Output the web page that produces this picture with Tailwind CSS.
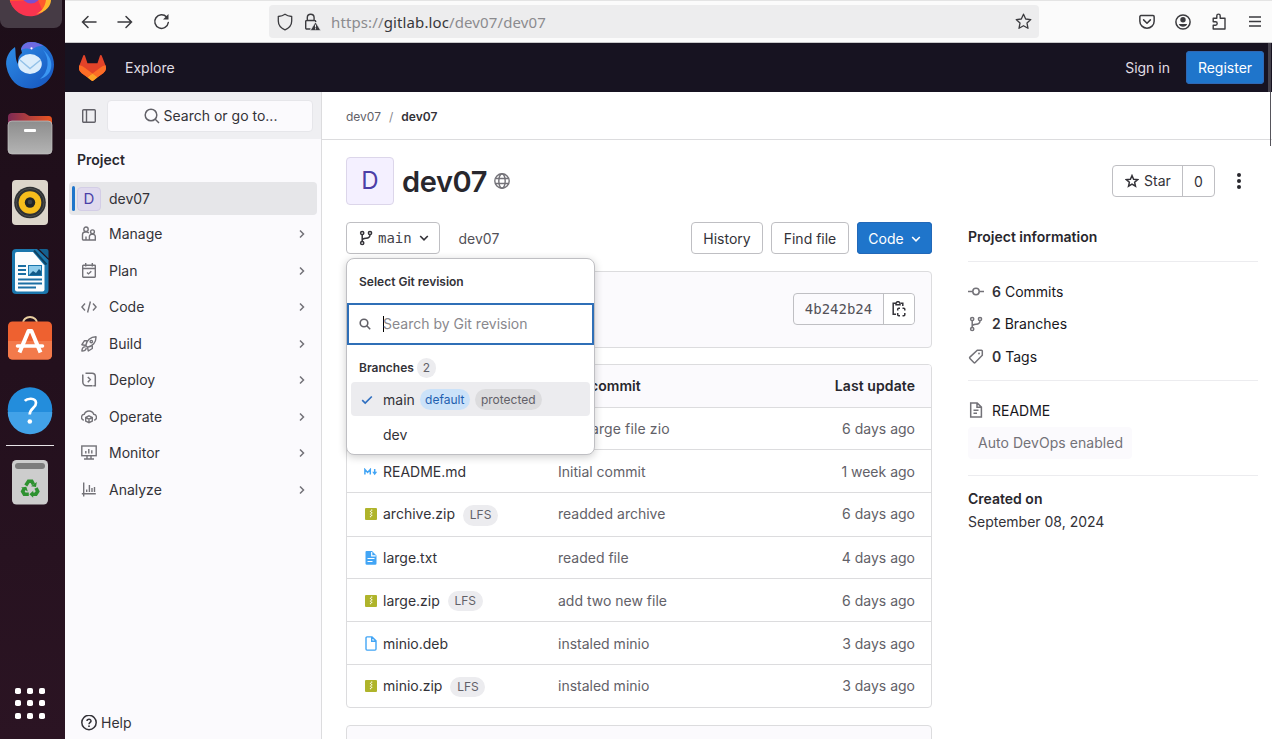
<!DOCTYPE html>
<html lang="en">
<head>
<meta charset="utf-8">
<title>dev07 / dev07 · GitLab</title>
<script src="https://cdn.jsdelivr.net/npm/@tailwindcss/browser@4"></script>
</head>
<body class="w-[1272px] h-[739px] overflow-hidden bg-white text-sm leading-5 text-[#333238] font-['Inter','Liberation_Sans',sans-serif]">
<svg class="hidden">
  <symbol id="chev-r" viewBox="0 0 8 10"><path d="M2 1.500 5.500 5 2 8.500" fill="none" stroke="currentColor" stroke-width="1.500"/></symbol>
  <symbol id="chev-d" viewBox="0 0 10 8"><path d="M1.200 2 5 5.800 8.800 2" fill="none" stroke="currentColor" stroke-width="1.600"/></symbol>
  <symbol id="branch" viewBox="0 0 16 16"><g fill="none" stroke="currentColor" stroke-width="1.500"><circle cx="4.200" cy="3" r="1.600"/><circle cx="12" cy="3" r="1.600"/><circle cx="4.200" cy="13" r="1.600"/><path d="M4.200 4.800v6.400M12 4.800c0 2.600-1.600 3.400-4 3.400-2.200 0-3.800.6-3.800 2.500"/></g></symbol>
  <symbol id="zip" viewBox="0 0 12 12"><rect width="12" height="12" rx="1" fill="#afb42b"/><path d="M6 1.500h1.300v1.300H6zM4.900 2.800h1.300v1.300H4.900zM6 4.100h1.300v1.300H6zM4.900 5.400h1.300v1.300H4.900zM6 6.700h1.300V8H6zM4.900 8h1.300v1.300H4.900z" fill="#f3f4d8"/></symbol>
</svg>
<div class="flex h-full">

  <!-- Ubuntu dock -->
  <aside class="flex w-[65px] shrink-0 flex-col bg-gradient-to-b from-[#1d0e19] via-[#23101d] to-[#2b1423]">
    <svg class="block shrink-0" width="65" height="28" viewBox="0 0 65 28"><rect x="0" y="-20" width="62" height="48" rx="8" fill="#463b45"/><circle cx="30" cy="-5.500" r="21" fill="#ff5a2c"/><path d="M10 1a21 21 0 0 0 33 11L38 0z" fill="#f8344f"/><path d="M35 14.500c7-2.500 10-8 11-14.500l5 0c0 5-4 12-16 14.500z" fill="#ffb82e"/><circle cx="31" cy="-6.500" r="10" fill="#7a4fcf"/></svg>
    <svg class="block shrink-0" width="65" height="72" viewBox="0 28 65 72"><defs><linearGradient id="tb" x1="0" y1="0" x2="1" y2="1"><stop offset="0" stop-color="#2f8fe8"/><stop offset="1" stop-color="#1553bd"/></linearGradient></defs><path d="M15 47c-7 5-10 12-8.500 20C9 80 18 88.500 30 88.500c13 0 24-10 24-24 0-8-4-14-9-18-4-3-8-4.500-14-4.500-6 0-9 3-10 7l1 4c-4 3-4 7-4 11-3-4-2-12-3-17z" fill="url(#tb)"/><path d="M21 50c1-5 5-8 10-8 5 0 9 2 12 4-5-.5-8 1-11 4-4-2-7-2-11 0z" fill="#6f6ae2"/><path d="M43 50c7 8 6 22-3 29 13-3 16-19 3-29z" fill="#3b97f2"/><ellipse cx="30" cy="64" rx="11.800" ry="10" fill="#dcedfb"/><path d="M20 60l10 8.500L40.500 60" fill="none" stroke="#93c1e8" stroke-width="1.400"/><circle cx="31.500" cy="48.300" r="1.100" fill="#fff"/></svg>
    <svg class="block shrink-0" width="65" height="68" viewBox="0 100 65 68"><defs><linearGradient id="fd" x1="0" x2="1"><stop offset="0" stop-color="#7d2a55"/><stop offset="1" stop-color="#ea5420"/></linearGradient><linearGradient id="fg" x1="0" y1="0" x2="0" y2="1"><stop offset="0" stop-color="#8d8d8d"/><stop offset="1" stop-color="#b4b4b4"/></linearGradient></defs><path d="M8 117c0-3 2-4 4-4h12c2 0 4 3 6 3h18c3 0 4 1 4 4v14H8z" fill="url(#fd)"/><rect x="8" y="121" width="44" height="33" rx="4" fill="url(#fg)" stroke="#c4c4c4" stroke-width=".7"/><rect x="24" y="129" width="12" height="3" rx="1" fill="#fff"/></svg>
    <svg class="block shrink-0" width="65" height="69" viewBox="0 168 65 69"><rect x="12" y="180" width="36" height="45" rx="4" fill="#ddd6cb"/><circle cx="30" cy="202.500" r="15.800" fill="#2f3133"/><circle cx="30" cy="202.500" r="14" fill="none" stroke="#555" stroke-width=".8"/><circle cx="30" cy="202.500" r="11.300" fill="#f7bd1c"/><circle cx="30" cy="202.500" r="5.200" fill="#222427"/><circle cx="30" cy="202" r="2.300" fill="#3c4044"/></svg>
    <svg class="block shrink-0" width="65" height="69" viewBox="0 237 65 69"><path d="M16 249h21l11.500 11v30a4 4 0 0 1-4 4H16a4 4 0 0 1-4-4v-37a4 4 0 0 1 4-4z" fill="#1b77ad"/><path d="M39 249h7.500a2 2 0 0 1 2 2v7.500z" fill="#14608f"/><path d="M17 252h16l11.500 13.500v24a2 2 0 0 1-2 2H17a2 2 0 0 1-2-2v-35.500a2 2 0 0 1 2-2z" fill="#fbfdfe"/><path d="M34 250.500 46.500 264.500" stroke="#0d4263" stroke-width="2"/><path d="M18 266h8M18 270h8M18 274h8M18 279.500h24M18 283.500h24M18 287.500h18" stroke="#1b6fa3" stroke-width="1.800"/><rect x="28.500" y="265.500" width="13" height="10" fill="#8fcdec" stroke="#1b77ad"/><path d="M29 275l4-4 3 2 3-4 2 2v4z" fill="#125a88"/></svg>
    <svg class="block shrink-0" width="65" height="69" viewBox="0 306 65 69"><path d="M23 325v-2a7 6 0 0 1 14 0v2" fill="none" stroke="#e9cfa0" stroke-width="2"/><rect x="8" y="321.500" width="44" height="38" rx="4.500" fill="#ee6130"/><path d="M8 341h44v14a4.500 4.500 0 0 1-4.500 4.500h-35A4.500 4.500 0 0 1 8 355z" fill="#f37a4b"/><path d="M19.500 352.500 28.500 331h3L40.500 352.500" fill="none" stroke="#fff" stroke-width="4" stroke-linejoin="round"/><path d="M17.500 346h25" stroke="#fff" stroke-width="3.500" stroke-linecap="round"/></svg>
    <svg class="block shrink-0" width="65" height="69" viewBox="0 375 65 69"><circle cx="30" cy="409.500" r="22.300" fill="#238ddc"/><path d="M7.700 412a22.300 22.300 0 0 0 44.600 0z" fill="#42a2e8"/><path d="M24.800 400.800c2-2.300 10.700-3.800 11.200 2 .3 5-6.300 5.500-6.300 11.700" fill="none" stroke="#fff" stroke-width="2.700"/><circle cx="29.800" cy="421.500" r="2.300" fill="#fff"/></svg>
    <div class="ml-[6px] mt-px h-px w-12 shrink-0 bg-[#e8e4e7]"></div>
    <svg class="block shrink-0" width="65" height="69" viewBox="0 446 65 69"><rect x="12" y="460" width="36" height="44.500" rx="4.500" fill="#cdcdcd"/><rect x="15" y="463" width="30" height="6" rx="3" fill="#7d7d7d"/><g fill="none" stroke="#2e9130" stroke-width="3.600"><path d="M25.800 485.500l2.700-4.200h3.300l1.700 3"/><path d="M36 488l1.700 3.300-1.800 2.900h-3.400"/><path d="M28.800 494.200h-4.500l-1.600-2.700 1.500-2.800"/></g><path d="M31 486.300l5 .6.800-5zM33.200 490.700v7l-3.800-3.500zM21 487.500l5.300-.8 1.500 4.800z" fill="#2e9130"/></svg>
    <div class="flex-1"></div>
    <svg class="mb-4 block shrink-0" width="65" height="40" viewBox="0 683 65 40"><g fill="#fff"><rect x="15" y="688" width="6" height="6" rx="1.800"/><rect x="27" y="688" width="6" height="6" rx="1.800"/><rect x="39" y="688" width="6" height="6" rx="1.800"/><rect x="15" y="700" width="6" height="6" rx="1.800"/><rect x="27" y="700" width="6" height="6" rx="1.800"/><rect x="39" y="700" width="6" height="6" rx="1.800"/><rect x="15" y="713" width="6" height="6" rx="1.800"/><rect x="27" y="713" width="6" height="6" rx="1.800"/><rect x="39" y="713" width="6" height="6" rx="1.800"/></g></svg>
  </aside>

  <div class="flex min-w-0 flex-1 flex-col">
    <!-- Browser toolbar -->
    <div class="flex h-[43px] shrink-0 items-center border-t border-b border-t-[#e4e4e4] border-b-[#c8c8ca] bg-[#fbfbfb] text-[#3b3b3f]">
      <svg class="ml-4" width="16" height="16" viewBox="0 0 16 16" fill="none" stroke="currentColor" stroke-width="1.500" stroke-linecap="round"><path d="M15 8H1.500M7 2.500 1.500 8 7 13.500"/></svg>
      <svg class="ml-5" width="16" height="16" viewBox="0 0 16 16" fill="none" stroke="currentColor" stroke-width="1.500" stroke-linecap="round"><path d="M1 8h13.500M9 2.500 14.500 8 9 13.500"/></svg>
      <svg class="ml-5" width="17" height="17" viewBox="0 0 17 17" fill="none" stroke="currentColor" stroke-width="1.500" stroke-linecap="round"><path d="M15.300 9.500A6.800 6.800 0 1 1 13.600 4"/><path d="M15.500 1v5.500H10z" fill="currentColor" stroke="none"/></svg>
      <div class="ml-[99px] flex h-[33px] w-[770px] items-center rounded bg-[#ededee]">
        <svg class="ml-2" width="16" height="18" viewBox="0 0 16 18" fill="none" stroke="currentColor" stroke-width="1.300" stroke-linejoin="round"><path d="M8 1.200C6 2.700 3.500 3.300 1.300 3.500V8c0 4.500 3.200 7.300 6.700 8.800 3.500-1.500 6.700-4.300 6.700-8.800V3.500C12.500 3.300 10 2.700 8 1.200z"/></svg>
        <svg class="ml-[11px]" width="17" height="18" viewBox="0 0 17 18" fill="none" stroke="currentColor" stroke-width="1.400"><path d="M6.500 16H2.700a1 1 0 0 1-1-1V8.500a1 1 0 0 1 1-1h8a1 1 0 0 1 1 1V9M3.300 7.500V4.700a3.400 3.400 0 0 1 6.800 0v2.800"/><path d="M11.500 9 16.700 17.500H6.300z" fill="currentColor" stroke="#ededee" stroke-width=".6"/><path d="M11.500 11.700v2.800M11.500 15.200v1.200" stroke="#ededee" stroke-width="1"/></svg>
        <span class="ml-2.5 whitespace-nowrap text-[15px] tracking-[0.12px] text-[#8b8b8e] font-['Noto_Sans',sans-serif]">https://<span class="text-[#38383b]">gitlab.loc</span>/dev07/dev07</span>
        <svg class="mr-[7px] ml-auto" width="17" height="17" viewBox="0 0 17 17" fill="none" stroke="currentColor" stroke-width="1.300" stroke-linejoin="round"><path d="M8.500 1.200 10.700 6l5.100.6L12 10.100l1 5.200-4.500-2.600L4 15.300l1-5.200L1.200 6.600 6.300 6z"/></svg>
      </div>
      <svg class="ml-[100px]" width="16" height="16" viewBox="0 0 15 15" fill="none" stroke="currentColor" stroke-width="1.400" stroke-linecap="round" stroke-linejoin="round"><path d="M1.800 1.500h11.400a1 1 0 0 1 1 1v4.300a6.700 6.500 0 0 1-13.400 0V2.500a1 1 0 0 1 1-1z"/><path d="M4.300 5.500 7.500 8.700l3.200-3.200"/></svg>
      <svg class="ml-5" width="16" height="16" viewBox="0 0 16 16"><circle cx="8" cy="8" r="7.100" fill="none" stroke="currentColor" stroke-width="1.500"/><circle cx="8" cy="5.800" r="2.700" fill="currentColor"/><path d="M3.800 10h8.400c-.6 1.900-2.200 2.700-4.200 2.700s-3.600-.8-4.200-2.700z" fill="currentColor"/></svg>
      <svg class="ml-5" width="16" height="17" viewBox="0 0 16 17" fill="none" stroke="currentColor" stroke-width="1.400" stroke-linejoin="round"><path d="M2.200 16V12.200h2.300a1.700 1.700 0 0 0 0-3.400H2.200V5.200h3.600V2.800a1.700 1.700 0 0 1 3.400 0v2.400H14V16z"/></svg>
      <svg class="ml-[21px]" width="14" height="16" viewBox="0 0 14 16" stroke="currentColor" stroke-width="1.300"><path d="M1 3h12M1 7.500h12M1 12h12"/></svg>
    </div>

    <!-- GitLab top bar -->
    <header class="relative flex h-[49px] shrink-0 items-center bg-[#171321] text-[#e0dee4]">
      <svg class="ml-[14px]" width="27" height="26" viewBox="0 0 25 24"><path d="m24.507 9.500-.034-.090L21.082.562a.896.896 0 0 0-1.694.091l-2.290 7.010H7.825L5.535.653a.898.898 0 0 0-1.694-.090L.451 9.411.416 9.500a6.297 6.297 0 0 0 2.090 7.278l.012.010.030.022 5.160 3.867 2.560 1.935 1.554 1.176a1.051 1.051 0 0 0 1.268 0l1.555-1.176 2.560-1.935 5.197-3.890.014-.010A6.297 6.297 0 0 0 24.507 9.500Z" fill="#E24329"/><path d="m24.507 9.500-.034-.090a11.440 11.440 0 0 0-4.560 2.051l-7.447 5.632 4.742 3.584 5.197-3.890.014-.010A6.297 6.297 0 0 0 24.507 9.500Z" fill="#FC6D26"/><path d="m7.707 20.677 2.560 1.935 1.555 1.176a1.051 1.051 0 0 0 1.268 0l1.555-1.176 2.560-1.935-4.743-3.584-4.755 3.584Z" fill="#FCA326"/><path d="M5.010 11.461a11.430 11.430 0 0 0-4.560-2.050L.416 9.500a6.297 6.297 0 0 0 2.090 7.278l.012.010.030.022 5.160 3.867 4.745-3.584-7.444-5.632Z" fill="#FC6D26"/></svg>
      <span class="mt-px ml-[19px]">Explore</span>
      <span class="mt-px ml-auto">Sign in</span>
      <span class="mr-2 ml-4 flex h-[33px] w-[78px] items-center justify-center rounded bg-[#1f75cb] text-white shadow-[inset_0_0_0_1px_#2f68b4]">Register</span>
      <i class="absolute top-0 right-px h-[49px] w-[3px] bg-[#45424d]"></i>
    </header>

    <div class="flex min-h-0 flex-1">
      <!-- Project sidebar -->
      <nav class="flex w-[257px] shrink-0 flex-col border-r border-[#dcdcde] bg-[#fbfafd]">
        <div class="flex h-[47px] shrink-0 items-center bg-[#ececef]/80">
          <svg class="ml-[17px] text-[#626168]" width="14" height="14" viewBox="0 0 14 14" fill="none" stroke="currentColor" stroke-width="1.400"><rect x=".7" y=".7" width="12.600" height="12.600" rx="1"/><path d="M4.500 1v12"/></svg>
          <div class="ml-[11px] flex h-[32px] w-[206px] items-center justify-center gap-1 rounded border border-[#e6e6ea] bg-[#fbfafd] pl-px">
            <svg class="text-[#626168]" width="16" height="16" viewBox="0 0 16 16" fill="none" stroke="currentColor" stroke-width="1.500"><circle cx="7" cy="7" r="5.800"/><path d="m11 11 4 4"/></svg>
            <span>Search or go to...</span>
          </div>
        </div>
        <h2 class="mt-[11px] ml-3 font-semibold text-[#28272d]">Project</h2>
        <div class="mt-3 mr-1 ml-1 flex h-[33px] items-center rounded bg-[#e6e6e9]">
          <i class="ml-[3px] h-[25px] w-[3px] rounded bg-[#1f75cb]"></i>
          <span class="ml-[2px] flex h-6 w-6 items-center justify-center rounded border border-[#d3cde6] bg-[#e0daee] text-[15px] text-[#4a3fa8]">D</span>
          <span class="ml-2">dev07</span>
        </div>
        <ul class="mt-px flex flex-col text-[#333238] *:flex *:h-[36.5px] *:items-center">
          <li><svg class="mr-3 ml-4 text-[#737278]" width="16" height="16" viewBox="0 0 16 16" fill="none" stroke="currentColor" stroke-width="1.400"><circle cx="5" cy="3.200" r="2.200"/><circle cx="11.500" cy="5.800" r="1.900"/><path d="M8 14H2.500a1 1 0 0 1-1-1V8.500A2.700 2.700 0 0 1 4.200 6h1.600a2.400 2.400 0 0 1 2 1.200M8.400 14V10.500a2.200 2.200 0 0 1 2.200-2.200h1.500a2.200 2.200 0 0 1 2.200 2.200V14zM5 10.500V14"/></svg>Manage<svg class="mr-[15px] ml-auto text-[#737278]" width="8" height="10"><use href="#chev-r"/></svg></li>
          <li><svg class="mr-3 ml-4 text-[#737278]" width="16" height="16" viewBox="0 0 16 16" fill="none" stroke="currentColor" stroke-width="1.400"><rect x="1.700" y="2.200" width="12.600" height="12" rx=".6"/><path d="M4.700 0v3.500M11.300 0v3.500M2 5.500h12M6 9.500l1.500 1.400 2.800-2.700"/></svg>Plan<svg class="mr-[15px] ml-auto text-[#737278]" width="8" height="10"><use href="#chev-r"/></svg></li>
          <li><svg class="mr-3 ml-4 text-[#737278]" width="16" height="16" viewBox="0 0 16 16" fill="none" stroke="currentColor" stroke-width="1.400"><path d="M4 4.500.9 8 4 11.500M12 4.500 15.100 8 12 11.500M9.400 2.500l-2.800 11"/></svg>Code<svg class="mr-[15px] ml-auto text-[#737278]" width="8" height="10"><use href="#chev-r"/></svg></li>
          <li><svg class="mr-3 ml-4 text-[#737278]" width="16" height="16" viewBox="0 0 16 16" fill="none" stroke="currentColor" stroke-width="1.400" stroke-linejoin="round"><path d="M4.800 9.500C5.500 4.500 9.500.8 15 .8c.2 5.500-3.500 9.700-8.500 10.400zM6.200 4.700H3.500L.9 8.700l4 .8M11.300 9.800v2.700L7.300 15l-.8-3.800M4.500 11C2 10.500 1 12.500.9 15c2 0 4.600-.8 4.200-3.200"/><circle cx="10.300" cy="5.600" r="1.200"/></svg>Build<svg class="mr-[15px] ml-auto text-[#737278]" width="8" height="10"><use href="#chev-r"/></svg></li>
          <li><svg class="mr-3 ml-4 text-[#737278]" width="16" height="16" viewBox="0 0 16 16" fill="none" stroke="currentColor" stroke-width="1.500"><path d="M4.500 1.200H11a3.300 3.300 0 0 1 3.300 3.300v9.200h-2M1 3.200h1.500M1.800 3.200V10a3.800 3.800 0 0 0 3.800 3.800h6M6.800 5 9.300 7.600 6.800 10.200"/></svg>Deploy<svg class="mr-[15px] ml-auto text-[#737278]" width="8" height="10"><use href="#chev-r"/></svg></li>
          <li><svg class="mr-3 ml-4 text-[#737278]" width="16" height="16" viewBox="0 0 16 16" fill="none" stroke="currentColor" stroke-width="1.400"><path d="M2.800 11.200A3 3 0 0 1 3.300 5.300 5 5 0 0 1 12.700 5.300a3 3 0 0 1 .5 5.900"/><path d="M8 6.800l3.300 1.600v3.700L8 13.700l-3.300-1.600V8.400zM4.700 8.500 8 10.100l3.300-1.600M8 10.100v3.500"/></svg>Operate<svg class="mr-[15px] ml-auto text-[#737278]" width="8" height="10"><use href="#chev-r"/></svg></li>
          <li><svg class="mr-3 ml-4 text-[#737278]" width="16" height="16" viewBox="0 0 16 16" fill="none" stroke="currentColor" stroke-width="1.400"><rect x=".8" y="1" width="14.400" height="9.700"/><path d="M4.800 6v2.400M7.800 4v4.400M10.800 5.200v3.200M6 10.700v3M10 10.700v3M3 14h10"/></svg>Monitor<svg class="mr-[15px] ml-auto text-[#737278]" width="8" height="10"><use href="#chev-r"/></svg></li>
          <li><svg class="mr-3 ml-4 text-[#737278]" width="16" height="16" viewBox="0 0 16 16" fill="none" stroke="currentColor" stroke-width="1.400"><path d="M2.700.5v14M.8 11.800h14M5.700 7.500V10M8.400 3v7M11 6v4M13.500 5v5"/></svg>Analyze<svg class="mr-[15px] ml-auto text-[#737278]" width="8" height="10"><use href="#chev-r"/></svg></li>
        </ul>
        <div class="mt-auto mb-[6px] ml-4 flex items-center gap-1">
          <svg width="16" height="16" viewBox="0 0 16 16" fill="none" stroke="currentColor" stroke-width="1.500"><circle cx="8" cy="7.500" r="7.200"/><path d="M6 6C6 3.500 10.200 3.700 10 6.100 9.900 7.400 8 7.400 8 9.200"/><circle cx="8" cy="11.200" r=".9" fill="currentColor" stroke="none"/></svg>Help
        </div>
      </nav>

      <!-- Page -->
      <div class="relative flex min-w-0 flex-1 flex-col">
        <i class="absolute top-0 right-px h-[54px] w-px bg-[#56555c]"></i>
        <div class="flex h-[48px] shrink-0 items-center border-b border-[#dcdcde] pt-0.5 pl-6 text-xs">
          <span class="text-[#626168]">dev07</span><span class="mx-2 text-[#89888d]">/</span><span class="font-semibold">dev07</span>
        </div>
        <div class="mt-[17px] flex h-12 shrink-0 items-center pl-6">
          <span class="flex h-12 w-12 items-center justify-center rounded border border-[#dcd6ea] bg-[#f4f0ff] text-2xl text-[#4b3fa6]">D</span>
          <h1 class="mt-0.5 ml-2 text-[29px] font-semibold tracking-[-0.4px] text-[#28272d]">dev07</h1>
          <svg class="ml-[7px] text-[#737278]" width="16" height="16" viewBox="0 0 16 16" fill="none" stroke="currentColor" stroke-width="1.400"><circle cx="8" cy="8" r="7.200"/><ellipse cx="8" cy="8" rx="3.200" ry="7.200"/><path d="M1.500 5.500h13M1.500 10.500h13"/></svg>
          <div class="ml-auto flex h-8 w-[103px] rounded border border-[#bfbfc3]">
            <span class="flex w-[70px] items-center gap-[5px] border-r border-[#bfbfc3] pl-3"><svg width="14" height="14" viewBox="0 0 16 16" fill="none" stroke="currentColor" stroke-width="1.700"><path d="M8 1.800 9.800 6l4.700.4L11 9.500l1 4.500-4-2.400L4 14l1-4.500L1.500 6.400 6.200 6z"/></svg>Star</span>
            <span class="flex flex-1 items-center justify-center pt-0.5">0</span>
          </div>
          <svg class="mr-[31px] ml-[22px]" width="4" height="16" viewBox="0 0 4 16" fill="#28272d"><circle cx="2" cy="2" r="2"/><circle cx="2" cy="8" r="2"/><circle cx="2" cy="14" r="2"/></svg>
        </div>
        <div class="mt-[17px] flex min-h-0 flex-1 pl-6">
          <main class="flex w-[586px] shrink-0 flex-col">
            <div class="relative flex h-8 shrink-0 items-center">
              <button class="flex h-8 w-[94px] items-center rounded border border-[#bfbfc3] pl-[11px]"><svg width="16" height="16"><use href="#branch"/></svg><span class="ml-1 text-[#434248] font-['DejaVu_Sans_Mono',monospace]">main</span><svg class="ml-[7px]" width="10" height="8"><use href="#chev-d"/></svg></button>
              <span class="mt-0.5 ml-[18.500px] text-[#535158]">dev07</span>
              <span class="ml-auto flex h-8 w-[72px] items-center justify-center rounded border border-[#bfbfc3] pt-0.5">History</span>
              <span class="ml-2 flex h-8 w-[78px] items-center justify-center rounded border border-[#bfbfc3] pt-0.5">Find file</span>
              <span class="ml-2 flex h-8 w-[75px] items-center justify-center gap-[7px] rounded bg-[#1f75cb] pt-0.5 text-white shadow-[inset_0_0_0_1px_#2268b8]">Code<svg width="10" height="8"><use href="#chev-d"/></svg></span>

              <!-- Revision dropdown -->
              <div class="absolute top-9 left-0 z-10 flex h-[197px] w-[249px] flex-col rounded-lg border border-[#bfbfc3] bg-white shadow-[0_2px_8px_rgba(5,5,6,0.2)]">
                <div class="flex h-11 shrink-0 items-center pt-0.5 pl-3 text-xs font-semibold">Select Git revision</div>
                <div class="flex h-[42px] shrink-0 items-center border-2 border-[#2f6fb7] pl-2.5 text-[#89888d]"><svg class="text-[#626168]" width="12" height="12" viewBox="0 0 12 12" fill="none" stroke="currentColor" stroke-width="1.600"><circle cx="5" cy="5" r="3.800"/><path d="m7.800 7.800 3.400 3.400"/></svg><i class="-mr-px ml-3 h-4 w-px bg-black"></i>Search by Git revision</div>
                <div class="mt-[13px] flex h-5 shrink-0 items-center pl-3 text-xs font-semibold">Branches<span class="ml-[3px] flex h-5 w-[19px] items-center justify-center rounded-full bg-[#ececef] font-normal text-[#626168]">2</span></div>
                <div class="mx-1 mt-1 flex h-[34px] shrink-0 items-center rounded bg-[#ececef] pt-px pl-2.5"><svg width="12" height="10" viewBox="0 0 12 10" fill="none" stroke="#2f6fc0" stroke-width="1.700"><path d="M1.200 5.200 4.200 8 10.800 1.500"/></svg><span class="mt-px ml-2.5">main</span><span class="ml-[5px] flex h-[21px] w-[50px] items-center justify-center rounded-full bg-[#cbe2f9] pt-px text-xs text-[#1f5fb0]">default</span><span class="ml-[5px] flex h-[21px] w-[67px] items-center justify-center rounded-full bg-[#dcdcde] pt-px text-xs text-[#626168]">protected</span></div>
                <div class="mt-[9px] pl-9">dev</div>
              </div>
            </div>

            <div class="mt-[17px] flex h-[77px] shrink-0 items-center rounded border border-[#dcdcde] bg-[#fbfafd]">
              <div class="mr-4 mb-0.5 ml-auto flex h-8 w-[122px] rounded border border-[#bfbfc3]"><span class="flex w-[90px] items-center justify-center border-r border-[#bfbfc3] text-[#535158] font-['DejaVu_Sans_Mono',monospace]">4b242b24</span><span class="flex flex-1 items-center justify-center rounded-r bg-white"><svg width="16" height="16" viewBox="0 0 16 16" fill="none" stroke="currentColor" stroke-width="1.500"><path d="M5 13.300H2.200V2.200H5M10 2.200h1.800V5M5 3.700V2L6.200.8h1.600L9 2v1.700zM6.700 9.500V8.200a1 1 0 0 1 1-1H9M11.500 7.200h1.300a1 1 0 0 1 1 1v1.300M13.800 12v1.800a1 1 0 0 1-1 1h-1.300M9 14.800H7.700a1 1 0 0 1-1-1V12"/></svg></span></div>
            </div>

            <div class="mt-4 flex h-[344px] shrink-0 flex-col overflow-hidden rounded border border-[#dcdcde] text-[#626168] *:flex *:shrink-0 *:items-center *:pr-4">
              <div class="h-[43px] border-b border-[#dcdcde] bg-[#fbfafd] font-semibold text-[#28272d]"><span class="w-[211px]"></span><span>Last commit</span><span class="ml-auto tracking-[0.080px]">Last update</span></div>
              <div class="h-[42px] border-b border-[#dcdcde]"><span class="w-[211px]"></span><span class="tracking-[0.120px]">add large file zio</span><span class="ml-auto">6 days ago</span></div>
              <div class="h-[43px] border-b border-[#dcdcde] pt-0.5"><svg class="mr-[5px] ml-[17px]" width="14" height="8" viewBox="0 0 14 8" fill="none" stroke="#42a5f5" stroke-width="1.500"><path d="M.9 6.500v-5l2.700 3 2.700-3v5M10.700 1v4"/><path d="M8.200 3.800h5L10.700 7.200z" fill="#42a5f5" stroke="none"/></svg><span class="w-[175px] text-[#333238]">README.md</span><span>Initial commit</span><span class="ml-auto">1 week ago</span></div>
              <div class="h-[44px] border-b border-[#dcdcde] pb-px"><svg class="mr-1.5 ml-[18px]" width="12" height="12"><use href="#zip"/></svg><span class="flex w-[175px] items-center text-[#333238]">archive.zip<span class="mt-0.5 ml-2 flex h-[21px] w-[35px] items-center justify-center rounded-full bg-[#ececef] text-xs text-[#626168]">LFS</span></span><span>readded archive</span><span class="ml-auto">6 days ago</span></div>
              <div class="h-[42px] border-b border-[#dcdcde]"><svg class="mr-1.5 ml-[18px]" width="12" height="14" viewBox="0 0 12 14"><path d="M1.500 0H7l4.500 4.500V12.500a1.300 1.300 0 0 1-1.300 1.300H1.800A1.300 1.300 0 0 1 .5 12.500V1a1 1 0 0 1 1-1z" fill="#42a5f5"/><path d="M6.700 1v3.800h4M2.500 7.500h7M2.500 10.500h5" stroke="#fff" stroke-width="1.200" fill="none"/></svg><span class="w-[175px] text-[#333238]">large.txt</span><span>readed file</span><span class="ml-auto">4 days ago</span></div>
              <div class="h-[43px] border-b border-[#dcdcde] pt-px"><svg class="mr-1.5 ml-[18px]" width="12" height="12"><use href="#zip"/></svg><span class="flex w-[175px] items-center text-[#333238]">large.zip<span class="ml-2 flex h-5 w-[35px] items-center justify-center rounded-full bg-[#ececef] text-xs text-[#626168]">LFS</span></span><span>add two new file</span><span class="ml-auto">6 days ago</span></div>
              <div class="h-[43px] border-b border-[#dcdcde] pt-px"><svg class="mr-1.5 ml-[18px]" width="12" height="15" viewBox="0 0 12 15" fill="none" stroke="#42a5f5" stroke-width="1.400"><path d="M2 .9h5l4 4v8.200a1 1 0 0 1-1 1H2a1 1 0 0 1-1-1V1.900a1 1 0 0 1 1-1zM6.700 1v4.300H11"/></svg><span class="w-[175px] text-[#333238]">minio.deb</span><span>instaled minio</span><span class="ml-auto">3 days ago</span></div>
              <div class="h-[42px]"><svg class="mr-1.5 ml-[18px]" width="12" height="12"><use href="#zip"/></svg><span class="flex w-[175px] items-center text-[#333238]">minio.zip<span class="mt-px ml-2 flex h-5 w-[35px] items-center justify-center rounded-full bg-[#ececef] text-xs text-[#626168]">LFS</span></span><span>instaled minio</span><span class="ml-auto">3 days ago</span></div>
            </div>
            <div class="mt-[17px] h-10 shrink-0 rounded-t border border-[#dcdcde] bg-[#fbfafd]"></div>
          </main>

          <!-- Project information -->
          <aside class="ml-9 flex w-[290px] shrink-0 flex-col">
            <h2 class="mt-[5px] font-semibold text-[#28272d]">Project information</h2>
            <div class="mt-[14px] flex flex-col border-t border-[#ececef] pt-[14px] text-[#18171d] *:flex *:items-center *:gap-2">
              <div class="h-8"><svg class="text-[#737278]" width="16" height="16" viewBox="0 0 16 16" fill="none" stroke="currentColor" stroke-width="1.500"><circle cx="8" cy="7.500" r="3.200"/><path d="M0 7.500h4.800M11.200 7.500H16"/></svg><span><b class="font-semibold text-[#333238]">6</b> Commits</span></div>
              <div class="h-8"><svg class="mb-px text-[#737278]" width="16" height="16"><use href="#branch"/></svg><span><b class="font-semibold text-[#333238]">2</b> Branches</span></div>
              <div class="h-[34px]"><svg class="text-[#737278]" width="16" height="16" viewBox="0 0 16 16" fill="none" stroke="currentColor" stroke-width="1.500"><path d="M9.300 1.300h4.200a.8.800 0 0 1 .8.800v4.200L7.200 13.500a1 1 0 0 1-1.400 0L1.900 9.500a1 1 0 0 1 0-1.400z"/><circle cx="11" cy="4.500" r=".9" fill="currentColor" stroke="none"/></svg><span><b class="font-semibold text-[#333238]">0</b> Tags</span></div>
            </div>
            <div class="mt-[6px] flex items-center gap-2 border-t border-[#ececef] pt-5 text-[#18171d]"><svg class="mb-0.5 text-[#737278]" width="16" height="16" viewBox="0 0 16 16" fill="none" stroke="currentColor" stroke-width="1.500"><path d="M2.700.9h6.500l4.200 4.200v10H2.700zM9 1v4.300h4.300M5.500 8.300h5M5.500 11.300h3.500"/></svg>README</div>
            <div class="mt-1.5 flex h-8 w-[164px] items-center rounded bg-[#fbfafd] pl-2.5 tracking-[0.050px] text-[#737278]">Auto DevOps enabled</div>
            <div class="mt-4 border-t border-[#ececef] pt-[13px]"><h3 class="font-semibold text-[#28272d]">Created on</h3><p class="mt-[3px]">September 08, 2024</p></div>
          </aside>
        </div>
      </div>
    </div>
  </div>
</div>
</body>
</html>
